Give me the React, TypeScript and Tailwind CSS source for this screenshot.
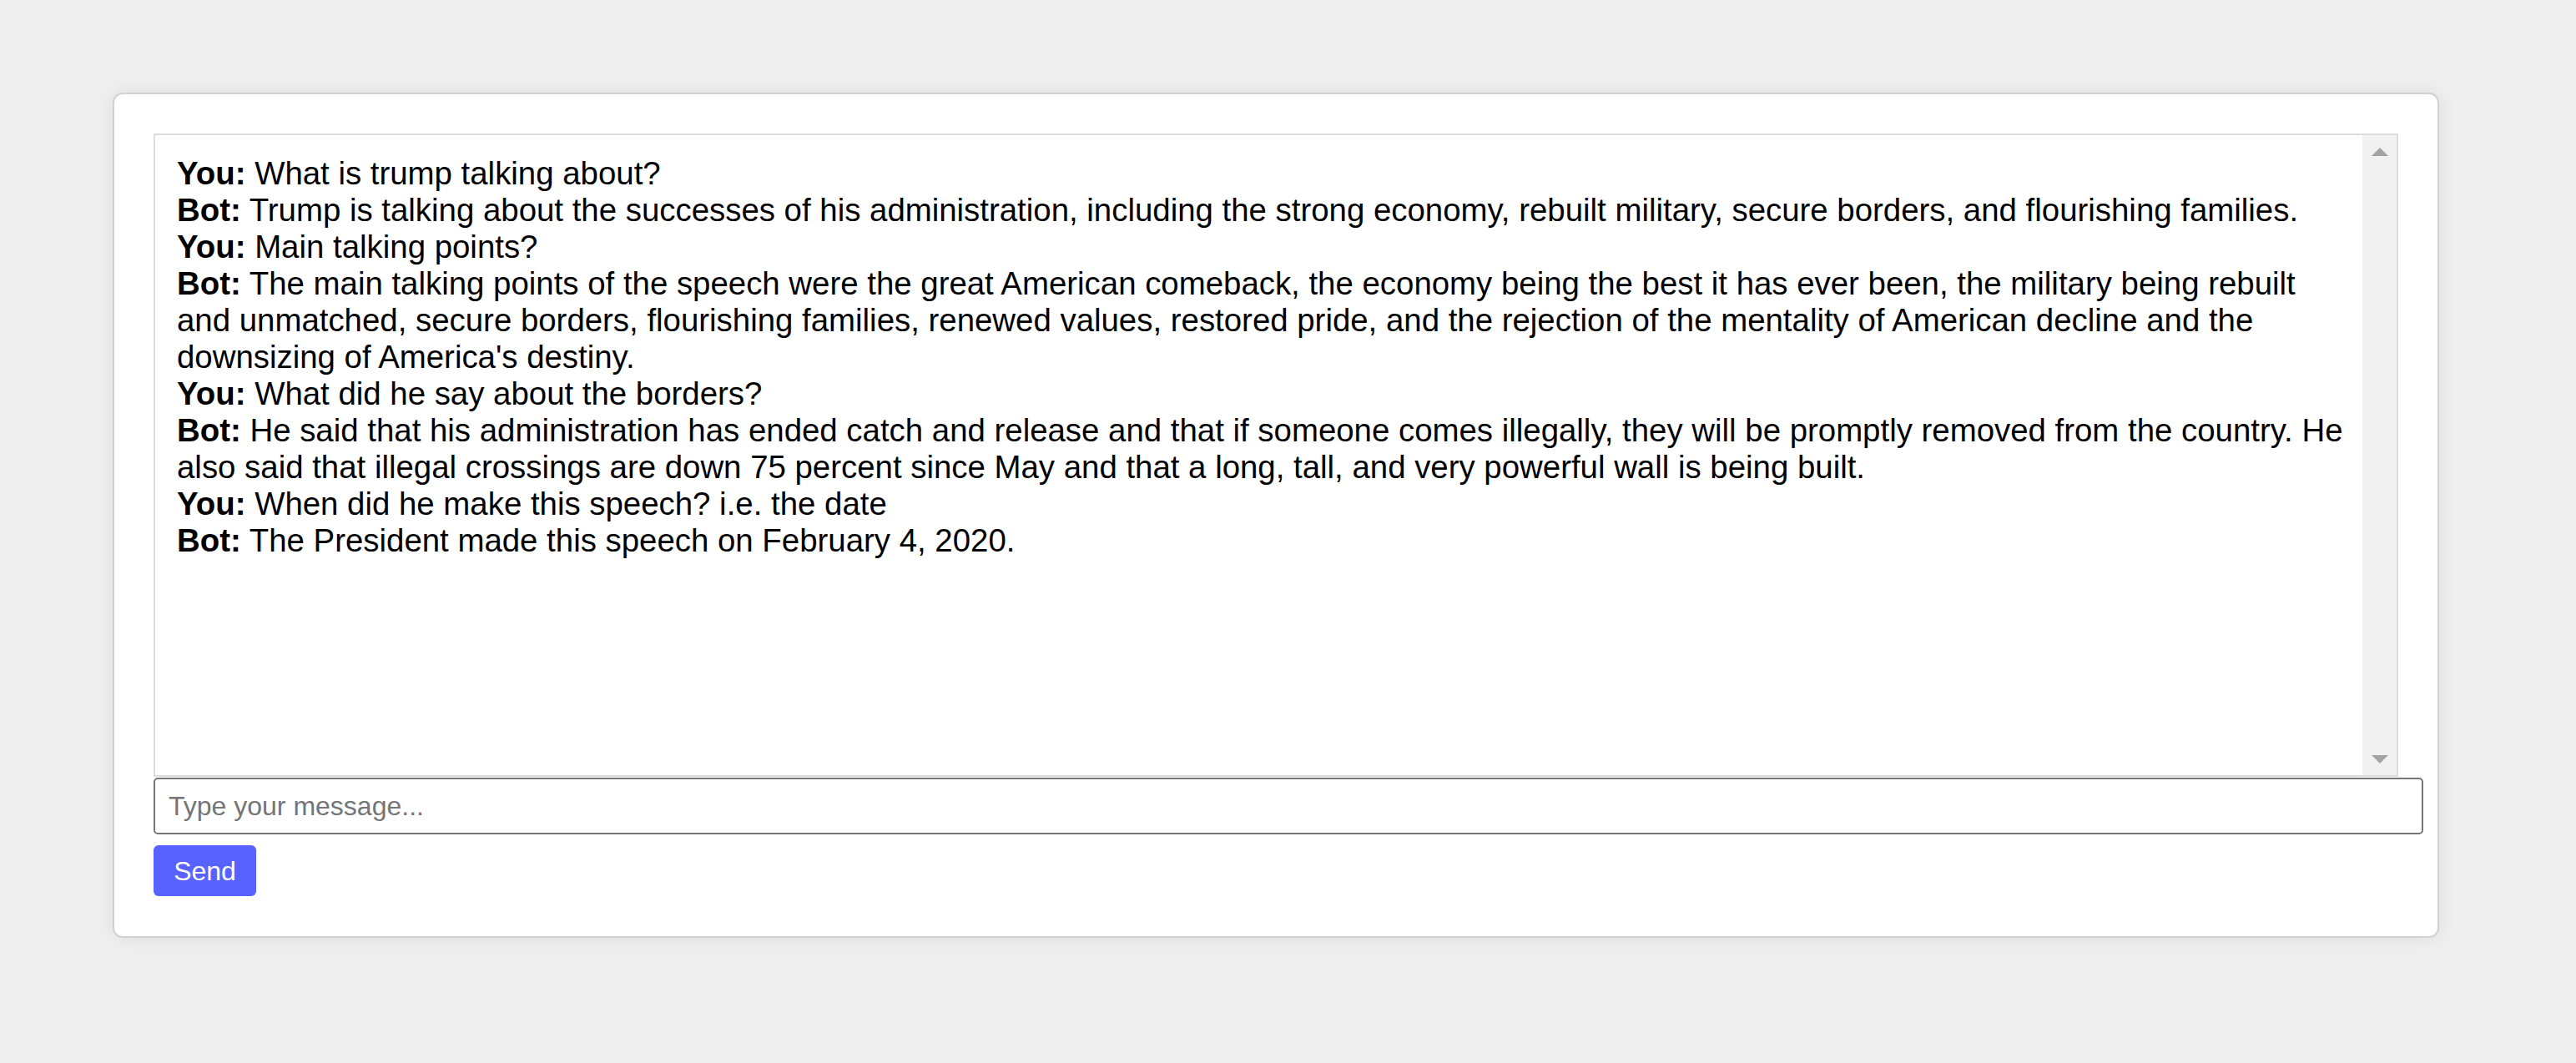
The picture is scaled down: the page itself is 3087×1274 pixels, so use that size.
import React from 'react';

// each message split into the lines it wraps to in the reference
const messages: { who: 'You' | 'Bot'; lines: string[] }[] = [
  { who: 'You', lines: ['What is trump talking about?'] },
  {
    who: 'Bot',
    lines: [
      'Trump is talking about the successes of his administration, including the strong economy, rebuilt military, secure borders, and flourishing families.',
    ],
  },
  { who: 'You', lines: ['Main talking points?'] },
  {
    who: 'Bot',
    lines: [
      'The main talking points of the speech were the great American comeback, the economy being the best it has ever been, the military being rebuilt',
      'and unmatched, secure borders, flourishing families, renewed values, restored pride, and the rejection of the mentality of American decline and the',
      "downsizing of America's destiny.",
    ],
  },
  { who: 'You', lines: ['What did he say about the borders?'] },
  {
    who: 'Bot',
    lines: [
      'He said that his administration has ended catch and release and that if someone comes illegally, they will be promptly removed from the country. He',
      'also said that illegal crossings are down 75 percent since May and that a long, tall, and very powerful wall is being built.',
    ],
  },
  { who: 'You', lines: ['When did he make this speech? i.e. the date'] },
  { who: 'Bot', lines: ['The President made this speech on February 4, 2020.'] },
];

export default function App() {
  return (
    <div className="min-h-[1274px] w-[3087px] bg-[#efefef] pl-[135px] pt-[111px] font-['Liberation_Sans',Arial,sans-serif]">
      <div className="w-[2788px] h-[1013px] bg-white border-2 border-[#d2d2d2] rounded-[12px] shadow-[0_0_24px_rgba(0,0,0,0.08)] pl-[47px] pt-[47px]">
        {/* chat log */}
        <div className="w-[2690px] h-[771px] border-2 border-[#dddddd] flex">
          <div className="flex-1 pl-[26px] pt-[24px] pr-[8px] text-[38.4px] leading-[44px] text-black">
            {messages.map((m, i) => (
              <div key={i}>
                <strong className="font-bold">{m.who}:</strong>{' '}
                {m.lines.map((line, j) => (
                  <React.Fragment key={j}>
                    {j > 0 && <br />}
                    {line}
                  </React.Fragment>
                ))}
              </div>
            ))}
          </div>
          {/* scrollbar */}
          <div className="w-[41px] bg-[#f1f1f1] flex flex-col items-center justify-between pt-[15px] pb-[14px]">
            <svg width="20" height="10" viewBox="0 0 20 10">
              <polygon points="10,0 20,10 0,10" fill="#a3a3a3" />
            </svg>
            <svg width="20" height="10" viewBox="0 0 20 10">
              <polygon points="0,0 20,0 10,10" fill="#a3a3a3" />
            </svg>
          </div>
        </div>

        <input
          type="text"
          placeholder="Type your message..."
          className="block mt-[1px] w-[2720px] h-[68px] border-2 border-[#767676] rounded-[5px] pl-[16px] pr-[16px] text-[32px] text-black placeholder:text-[#757575] outline-none font-['Liberation_Sans',Arial,sans-serif]"
        />

        <button className="block mt-[13px] w-[123px] h-[61px] rounded-[6px] bg-[#5762ff] text-white text-[32px] font-['Liberation_Sans',Arial,sans-serif]">
          Send
        </button>
      </div>
    </div>
  );
}
